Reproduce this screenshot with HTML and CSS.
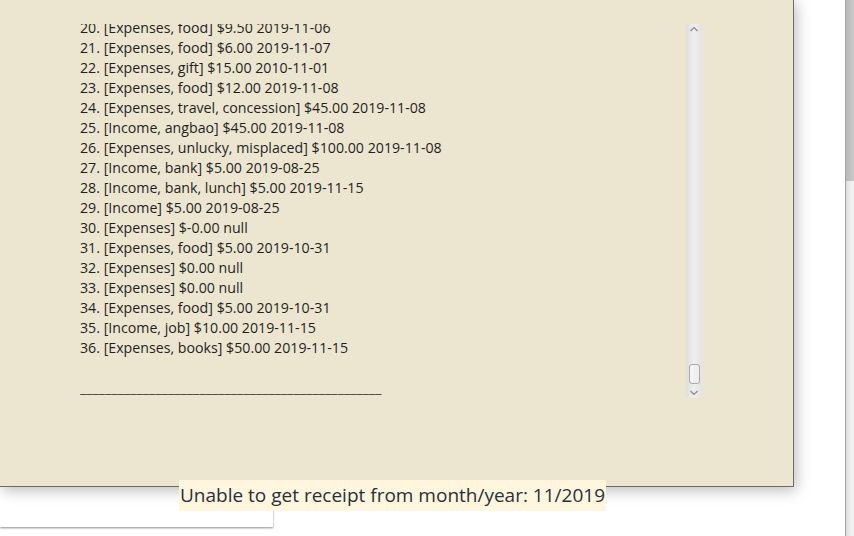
FILE: index.html
```html
<!DOCTYPE html>
<html>
<head>
<meta charset="utf-8">
<link rel="stylesheet" href="styles.css">
</head>
<body>
<div class="main">
  <div class="panel">
    <div class="viewport">
      <div class="content">
        <div class="row">20. [Expenses, food] $9.50 2019-11-06</div>
        <div class="row">21. [Expenses, food] $6.00 2019-11-07</div>
        <div class="row">22. [Expenses, gift] $15.00 2010-11-01</div>
        <div class="row">23. [Expenses, food] $12.00 2019-11-08</div>
        <div class="row">24. [Expenses, travel, concession] $45.00 2019-11-08</div>
        <div class="row">25. [Income, angbao] $45.00 2019-11-08</div>
        <div class="row">26. [Expenses, unlucky, misplaced] $100.00 2019-11-08</div>
        <div class="row">27. [Income, bank] $5.00 2019-08-25</div>
        <div class="row">28. [Income, bank, lunch] $5.00 2019-11-15</div>
        <div class="row">29. [Income] $5.00 2019-08-25</div>
        <div class="row">30. [Expenses] $-0.00 null</div>
        <div class="row">31. [Expenses, food] $5.00 2019-10-31</div>
        <div class="row">32. [Expenses] $0.00 null</div>
        <div class="row">33. [Expenses] $0.00 null</div>
        <div class="row">34. [Expenses, food] $5.00 2019-10-31</div>
        <div class="row">35. [Income, job] $10.00 2019-11-15</div>
        <div class="row">36. [Expenses, books] $50.00 2019-11-15</div>
        <div class="row">&nbsp;</div>
        <div class="row sep">________________________________________________</div>
      </div>
    </div>
    <div class="vscroll">
      <svg class="arrow" width="16" height="10" viewBox="0 0 16 10"><polyline points="4.5,7 8,3.5 11.5,7" fill="none" stroke="#8a8a8a" stroke-width="1.2"/></svg>
      <div class="track"></div>
      <div class="thumb"></div>
      <svg class="arrow" width="16" height="10" viewBox="0 0 16 10"><polyline points="4.5,3 8,6.5 11.5,3" fill="none" stroke="#8a8a8a" stroke-width="1.2"/></svg>
    </div>
  </div>
  <div class="lowerbox"></div>
  <div class="toast">Unable to get receipt from month/year: 11/2019</div>
</div>
<div class="winscroll"><div class="winthumb"></div></div>
</body>
</html>
```
FILE: styles.css
```css
html, body {
  margin: 0;
  padding: 0;
  background: #ffffff;
}
body {
  display: flex;
  width: 854px;
  height: 536px;
  overflow: hidden;
  font-family: "Open Sans", "Noto Sans", sans-serif;
}
.main {
  position: relative;
  flex: 1;
  display: flex;
  flex-direction: column;
}
.panel {
  position: relative;
  z-index: 2;
  box-sizing: border-box;
  width: 794px;
  height: 487px;
  background: #ece6d1;
  border-right: 1px solid #6c6c6c;
  border-bottom: 1px solid #6c6c6c;
  box-shadow: 2px 3px 14px rgba(0, 0, 0, 0.28);
  padding: 24px 91px 0 80px;
  display: flex;
  align-items: flex-start;
}
.viewport {
  flex: 1;
  height: 374px;
  overflow: hidden;
}
.content {
  margin-top: -6px;
  font-size: 14.2px;
  line-height: 20px;
  color: #1f1f1f;
}
.row {
  white-space: nowrap;
}
.sep {
  color: #4a4a4a;
  letter-spacing: 0.07px;
}
.vscroll {
  width: 16px;
  height: 374px;
  display: flex;
  flex-direction: column;
  align-items: center;
  background: linear-gradient(to right, #dedede, #efefef 50%, #e2e2e2);
}
.arrow {
  display: block;
  flex: none;
}
.track {
  flex: 1;
}
.thumb {
  box-sizing: border-box;
  width: 11px;
  height: 20px;
  border: 1px solid #a9a9a9;
  border-radius: 3px;
  background: linear-gradient(to right, #f6f6f6, #ececec);
  margin-bottom: 4px;
}
.lowerbox {
  position: relative;
  z-index: 1;
  width: 273px;
  height: 40px;
  background: #ffffff;
  box-shadow: 0 1px 2px rgba(0, 0, 0, 0.45);
}
.toast {
  position: absolute;
  z-index: 3;
  left: 179px;
  top: 480px;
  height: 31px;
  box-sizing: border-box;
  padding: 0 1px;
  background: #fff6dd;
  color: #2a2f3a;
  font-size: 19px;
  line-height: 31px;
  white-space: nowrap;
}
.winscroll {
  width: 9px;
  box-sizing: border-box;
  border-left: 1px solid #a3a3a3;
  background: linear-gradient(to right, #dcdcdc, #f0f0f0 60%);
}
.winthumb {
  height: 181px;
  background: linear-gradient(to right, #b9b9b9, #c9c9c9);
}
```
